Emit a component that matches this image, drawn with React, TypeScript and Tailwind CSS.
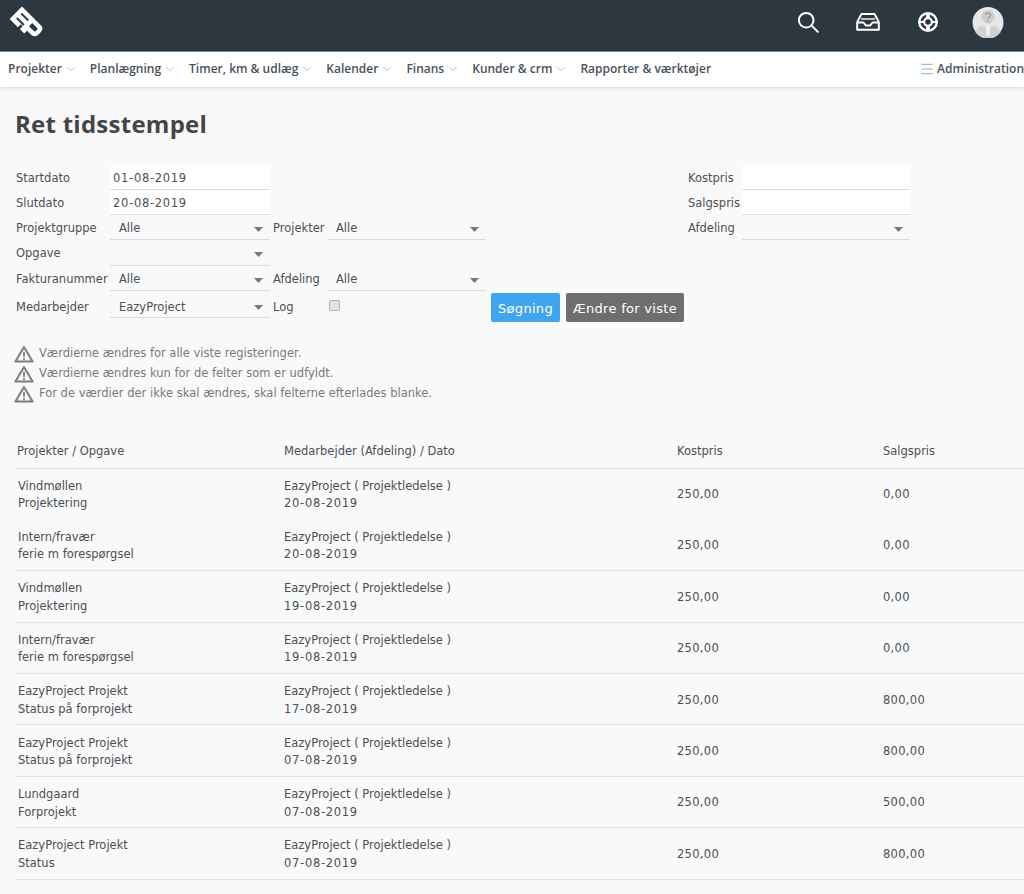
import React from "react";
import { ChevronDown, Menu } from "lucide-react";

const body = "font-['DejaVu_Sans','Liberation_Sans',sans-serif]";

const Logo = () => (
  <svg width="38" height="34" viewBox="0 0 38 34" className="block">
    <g transform="translate(14 1.5) rotate(45) scale(0.9)" fill="#fff">
      <path d="M0 0H30C33 0 35 2 35 6V9C35 13 32 15 29 15H23V19.5H16V15H13V19.5H0Z" />
      <g fill="#2c3740">
        <rect x="5" y="5" width="11" height="2.2" />
        <rect x="5" y="12" width="11" height="2.2" />
        <path d="M21 5H28.5C29.6 5 30.2 5.6 30.2 6.6V8.4C30.2 9.4 29.6 10 28.5 10H21Z" />
      </g>
    </g>
  </svg>
);

const Avatar = () => (
  <svg width="32" height="31" viewBox="0 0 32 32" className="block">
    <circle cx="16" cy="16" r="16" fill="#e6e6e6" />
    <circle cx="16" cy="10" r="7" fill="#cdcdcd" />
    <path d="M3 26C5 21 8 20 12 19L16 29L20 19C24 20 27 21 29 26A16 16 0 0 1 3 26Z" fill="#d2d2d2" />
    <path d="M13.8 19H18.2L17 23L18 28L16 30L14 28L15 23Z" fill="#f2f2f2" />
    <path d="M13.4 8.2C13.6 5.6 18.6 5.6 18.6 8.4C18.6 10.2 16 10.2 16 12.4M16 13.4V15" fill="none" stroke="#a2a2a2" strokeWidth="1.6" />
  </svg>
);

const Arrow = () => (
  <svg width="9" height="5" viewBox="0 0 9 5" className="block shrink-0">
    <path d="M0 0H9L4.5 5Z" fill="#777" />
  </svg>
);

const Warn = () => (
  <svg width="20" height="18" viewBox="0 0 20 18" className="block shrink-0 -ml-[1px]">
    <path d="M10 2L18.6 16.6H1.4Z" fill="none" stroke="#7d7d7d" strokeWidth="2" strokeLinejoin="round" />
    <path d="M10 6.8V12M10 13V15" stroke="#7d7d7d" strokeWidth="1.8" />
  </svg>
);

const nav = ["Projekter", "Planlægning", "Timer, km & udlæg", "Kalender", "Finans", "Kunder & crm"];

const Label = ({ children, cls = "leading-[27px]" }: { children?: React.ReactNode; cls?: string }) => (
  <div className={`text-[11.5px] text-[#4b5056] ${cls}`}>{children}</div>
);

const Field = ({ value }: { value: string }) => (
  <input
    readOnly
    value={value}
    className="block w-full h-full bg-white border-b border-[#dcdcdc] pl-[3px] pt-[2px] text-[11.5px] text-[#4b5056] tracking-[0.7px] outline-none"
  />
);

const Sel = ({ value, cls = "pt-[4px] pl-[9px]" }: { value?: string; cls?: string }) => (
  <div className={`flex h-full items-center justify-between border-b border-[#dcdcdc] pr-[7px] text-[11.5px] text-[#4b5056] ${cls}`}>
    <span>{value}</span>
    <Arrow />
  </div>
);

const rows = [
  ["Vindmøllen", "Projektering", "20-08-2019", "0,00"],
  ["Intern/fravær", "ferie m forespørgsel", "20-08-2019", "0,00"],
  ["Vindmøllen", "Projektering", "19-08-2019", "0,00"],
  ["Intern/fravær", "ferie m forespørgsel", "19-08-2019", "0,00"],
  ["EazyProject Projekt", "Status på forprojekt", "17-08-2019", "800,00"],
  ["EazyProject Projekt", "Status på forprojekt", "07-08-2019", "800,00"],
  ["Lundgaard", "Forprojekt", "07-08-2019", "500,00"],
  ["EazyProject Projekt", "Status", "07-08-2019", "800,00"],
];

const warnings = [
  "Værdierne ændres for alle viste registeringer.",
  "Værdierne ændres kun for de felter som er udfyldt.",
  "For de værdier der ikke skal ændres, skal felterne efterlades blanke.",
];

export default function App() {
  return (
    <div className={`${body} w-[1024px] h-[894px] overflow-hidden bg-[#f9f9f9] text-[#4b5056]`}>
      <header className="flex h-[52px] items-center justify-between bg-[#2c3740] border-b border-[#7d8c97] pb-[7px] pl-[8px] pr-[20px]">
        <Logo />
        <div className="flex items-center">
          <svg width="24" height="24" viewBox="0 0 24 24" fill="none" stroke="#fff" strokeWidth="2" className="block">
            <circle cx="10.2" cy="10.2" r="7.3" />
            <path d="M15.6 15.6L21.8 21.8" strokeLinecap="round" />
          </svg>
          <svg width="24" height="20" viewBox="0 0 24 20" fill="none" stroke="#fff" strokeWidth="2" strokeLinejoin="round" className="block ml-[36px]">
            <path d="M5.5 2H18.5L22.8 10V17.8H1.2V10Z" />
            <path d="M1.2 10.5H7.5L9.8 13.5H14.2L16.5 10.5H22.8" />
            <path d="M5 7H19" strokeWidth="1.4" />
          </svg>
          <svg width="22" height="22" viewBox="0 0 22 22" fill="none" stroke="#fff" className="block ml-[37px]">
            <circle cx="11" cy="11" r="8.8" strokeWidth="2.4" />
            <circle cx="11" cy="11" r="3.9" strokeWidth="2.2" />
            <path d="M11 2.5V7M11 15V19.5" strokeWidth="4" />
            <path d="M2.5 11H7M15 11H19.5" strokeWidth="2" />
          </svg>
          <div className="ml-[33px]"><Avatar /></div>
        </div>
      </header>

      <nav className="relative flex h-[35px] items-center justify-between bg-white pb-[1px] pl-[8px] shadow-[0_1px_4px_rgba(0,0,0,0.14)] font-['Open_Sans',sans-serif] font-semibold text-[12px] text-[#48525c]">
        <div className="flex items-center">
          {nav.map((n) => (
            <div key={n} className="flex items-center mr-[12px]">
              <span>{n}</span>
              <ChevronDown size={14} strokeWidth={1.5} className="ml-[2px] text-[#a9bccb]" />
            </div>
          ))}
          <span>Rapporter &amp; værktøjer</span>
        </div>
        <div className="flex items-center">
          <Menu size={16} strokeWidth={1.5} className="mr-[2px] text-[#8fb0c8]" />
          <span>Administration</span>
        </div>
      </nav>

      <main className="pl-[15px]">
        <h1 className="mt-[21px] font-['Open_Sans',sans-serif] text-[24px] leading-[32px] tracking-[0.25px] font-bold text-[#424649]">Ret tidsstempel</h1>

        <div className="mt-[25px] ml-[1px] flex items-start">
          <div className="grid grid-cols-[94px_160px_3px_55px_158px] grid-rows-[25px_25px_25px_26px_25px_27px]">
            <Label>Startdato</Label>
            <div className="h-[25px]"><Field value="01-08-2019" /></div>
            <div className="col-span-3" />
            <Label>Slutdato</Label>
            <div className="h-[25px]"><Field value="20-08-2019" /></div>
            <div className="col-span-3" />
            <Label>Projektgruppe</Label>
            <Sel value="Alle" />
            <div />
            <Label>Projekter</Label>
            <Sel value="Alle" cls="pt-[4px] pl-[8px]" />
            <Label>Opgave</Label>
            <Sel />
            <div className="col-span-3" />
            <Label>Fakturanummer</Label>
            <Sel value="Alle" />
            <div />
            <Label>Afdeling</Label>
            <Sel value="Alle" cls="pt-[4px] pl-[8px]" />
            <Label cls="leading-[33px]">Medarbejder</Label>
            <Sel value="EazyProject" cls="pt-[7px] pl-[9px]" />
            <div />
            <Label cls="leading-[33px]">Log</Label>
            <div className="pt-[9px] pl-[1px]">
              <div className="h-[11px] w-[11px] rounded-[2px] border border-[#b0b0b0] bg-[#e4e4e4]" />
            </div>
          </div>

          <div className="ml-[5px] mt-[128px] flex gap-[6px] text-[13px] tracking-[0.3px] text-white">
            <button className="h-[29px] w-[69px] rounded-[2px] bg-[#3fa5ef] pt-[2px]">Søgning</button>
            <button className="h-[29px] w-[118px] rounded-[2px] bg-[#6e6e6e] pt-[2px]">Ændre for viste</button>
          </div>

          <div className="ml-[4px] grid w-[222px] grid-cols-[54px_168px] grid-rows-[25px_25px_25px]">
            <Label>Kostpris</Label>
            <div className="h-[25px]"><Field value="" /></div>
            <Label>Salgspris</Label>
            <div className="h-[25px]"><Field value="" /></div>
            <Label>Afdeling</Label>
            <Sel />
          </div>
        </div>

        <div className="mt-[22px] flex flex-col text-[11.5px] text-[#7a7a7a]">
          {warnings.map((w) => (
            <div key={w} className="flex h-[20px] items-center">
              <Warn />
              <span className="ml-[5px]">{w}</span>
            </div>
          ))}
        </div>

        <table className="mt-[29px] w-[1009px] table-fixed border-collapse text-[11.5px] text-[#4b5056]">
          <colgroup>
            <col className="w-[267px]" />
            <col className="w-[393px]" />
            <col className="w-[206px]" />
            <col />
          </colgroup>
          <thead>
            <tr className="h-[35px] border-b border-[#dcdcdc]">
              {["Projekter / Opgave", "Medarbejder (Afdeling) / Dato", "Kostpris", "Salgspris"].map((h) => (
                <th key={h} className="pl-[2px] pt-[3px] text-left font-normal">{h}</th>
              ))}
            </tr>
          </thead>
          <tbody>
            {rows.map((r, i) => (
              <tr key={i} className={`h-[51.4px] leading-[17.5px] ${i === 0 ? "" : "border-b border-[#e4e4e4]"}`}>
                <td className="pl-[3px] pt-[3px]">{r[0]}<br />{r[1]}</td>
                <td className="pl-[2px] pt-[3px]">EazyProject ( Projektledelse )<br /><span className="tracking-[0.7px]">{r[2]}</span></td>
                <td className="pl-[2px] pt-[2px] tracking-[0.3px]">250,00</td>
                <td className="pl-[2px] pt-[2px] tracking-[0.3px]">{r[3]}</td>
              </tr>
            ))}
          </tbody>
        </table>
      </main>
    </div>
  );
}
